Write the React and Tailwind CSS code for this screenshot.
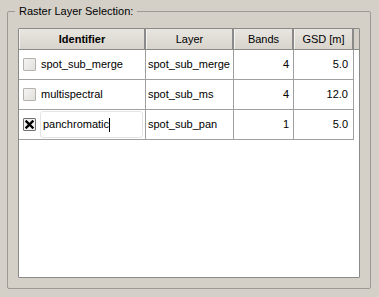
import React from "react";

const rows = [
  { id: "spot_sub_merge", layer: "spot_sub_merge", bands: "4", gsd: "5.0", checked: false },
  { id: "multispectral", layer: "spot_sub_ms", bands: "4", gsd: "12.0", checked: false },
  { id: "panchromatic", layer: "spot_sub_pan", bands: "1", gsd: "5.0", checked: true, editing: true },
];

const Checkbox = ({ checked }) => (
  <div
    className={`w-[13px] h-[13px] shrink-0 rounded-[1px] border flex items-center justify-center ${
      checked ? "border-[#707070] bg-[#f0f0f0]" : "border-[#b4b2ac] bg-gradient-to-br from-[#f4f4f2] to-[#e2e0dc]"
    }`}
  >
    {checked && (
      <svg width="9" height="9" viewBox="0 0 9 9">
        <path d="M1.5 1.5 L7.5 7.5 M7.5 1.5 L1.5 7.5" stroke="#000" strokeWidth="2.4" strokeLinecap="square" />
      </svg>
    )}
  </div>
);

const HeaderCell = ({ children, bold, width }) => (
  <div
    className={`${width} h-full flex items-center justify-center border-r-2 border-[#8a8a8a] border-l border-l-[#f4f3f0] bg-gradient-to-b from-[#e8e6e1] to-[#d8d4cc] ${
      bold ? "font-bold" : ""
    }`}
  >
    {children}
  </div>
);

export default function App() {
  return (
    <div
      className="w-[379px] h-[297px] bg-[#d4d0c8] pl-[7px] pt-[11px] text-[11px] text-black"
      style={{ fontFamily: '"Liberation Sans", Arial, sans-serif' }}
    >
      <div className="relative w-[364px] h-[278px] border border-[#9c9a94] rounded-[2px] pl-[10px] pt-[16px]">
        <div className="absolute -top-[7px] left-[7px] px-[4px] bg-[#d4d0c8] leading-[13px]">
          Raster Layer Selection:
        </div>
        <div className="w-[342px] h-[250px] border border-[#8c8a86] rounded-[1px] bg-white">
          <div className="flex h-[21px] bg-[#d4d0c8] border-b border-[#8a8a8a]">
            <HeaderCell bold width="w-[127px]">Identifier</HeaderCell>
            <HeaderCell width="w-[88px]">Layer</HeaderCell>
            <HeaderCell width="w-[60px]">Bands</HeaderCell>
            <HeaderCell width="w-[60px]">GSD [m]</HeaderCell>
          </div>
          {rows.map((r) => (
            <div key={r.id} className="flex h-[30px]">
              <div className="w-[127px] flex items-center pl-[4px] border-r border-b border-[#a0a0a0]">
                <Checkbox checked={r.checked} />
                {r.editing ? (
                  <div className="ml-[4px] w-[103px] h-[27px] flex items-center pl-[2px] rounded-[3px] border border-[#e4e4e4] bg-white">
                    <span>{r.id}</span>
                    <span className="w-px h-[14px] bg-black" />
                  </div>
                ) : (
                  <span className="ml-[5px]">{r.id}</span>
                )}
              </div>
              <div className="w-[88px] flex items-center pl-[2px] border-r border-b border-[#a0a0a0]">
                {r.layer}
              </div>
              <div className="w-[60px] flex items-center justify-end pr-[4px] border-r border-b border-[#a0a0a0]">
                {r.bands}
              </div>
              <div className="w-[60px] flex items-center justify-end pr-[5px] border-r border-b border-[#a0a0a0]">
                {r.gsd}
              </div>
            </div>
          ))}
        </div>
      </div>
    </div>
  );
}
